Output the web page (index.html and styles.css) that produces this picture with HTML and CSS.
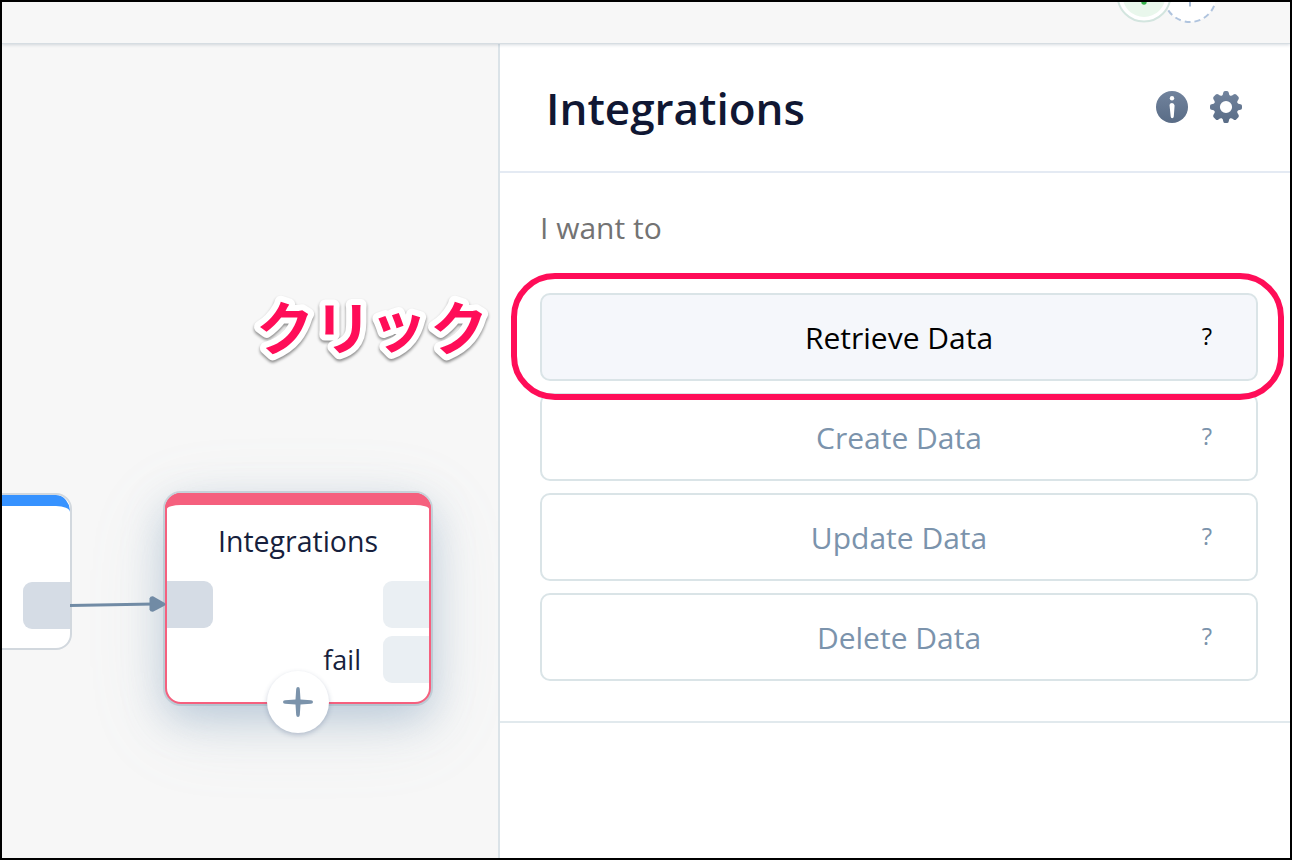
FILE: index.html
```html
<!DOCTYPE html>
<html lang="en">
<head>
<meta charset="utf-8">
<title>Integrations</title>
<link rel="stylesheet" href="styles.css">
</head>
<body>
<div class="app">
  <header class="topbar">
    <svg class="avatars" width="110" height="24" viewBox="0 0 110 24">
      <circle cx="80" cy="-6" r="26" fill="#fff" stroke="#b0c4de" stroke-width="2" stroke-dasharray="6 4"/>
      <path d="M80-10V4.500" stroke="#a9bdd8" stroke-width="2"/>
      <circle cx="34" cy="-7" r="26.500" fill="#fff" stroke="#d3e5df" stroke-width="2"/>
      <circle cx="34" cy="-6.500" r="21.500" fill="#e9f7ec"/>
      <circle cx="34" cy="0" r="2.700" fill="#34b24a"/>
    </svg>
  </header>
  <main class="workspace">
    <section class="canvas">
      <div class="node node-prev"><i class="port port-prev"></i></div>
      <div class="node node-current">
        <h2 class="node-title">Integrations</h2>
        <i class="port port-in"></i>
        <i class="port port-next"></i>
        <i class="port port-fail"></i>
        <span class="fail-label">fail</span>
      </div>
      <svg class="edge" width="100" height="24" viewBox="0 0 100 24">
        <path d="M0 13.500L84 12" stroke="#718ba5" stroke-width="3"/>
        <path d="M79.500 6.500Q80 4 83 4.200L94 10.500Q97 12.300 94 14L83 19.800Q80 20 79.500 17.500Z" fill="#718ba5"/>
      </svg>
      <button class="add" aria-label="Add">
        <svg width="32" height="32" viewBox="0 0 32 32"><path d="M16 1Q17.800 1 17.800 3L18.500 13.500L29 14.200Q31 14.400 31 16T29 17.800L18.500 18.500L17.800 29Q17.600 31 16 31T14.200 29L13.500 18.500L3 17.800Q1 17.600 1 16T3 14.200L13.500 13.500L14.200 3Q14.400 1 16 1Z" fill="#7b93ab"/></svg>
      </button>
      <svg class="callout" width="250" height="84" viewBox="0 0 250 84" lang="ja"><text x="8 66 121.500 182" y="60 60 56.500 60">クリック</text></svg>
    </section>
    <aside class="panel">
      <div class="panel-head">
        <h1 class="title">Integrations</h1>
        <div class="tools">
          <svg width="32" height="32" viewBox="0 0 32 32">
            <defs><linearGradient id="slate" x1="0" y1="0" x2="0" y2="1"><stop offset="0" stop-color="#71839d"/><stop offset="1" stop-color="#596c86"/></linearGradient></defs>
            <circle cx="16" cy="16" r="16" fill="url(#slate)"/>
            <circle cx="16" cy="7.300" r="2.200" fill="#fff"/>
            <path d="M13.500 14Q13.800 12 16 12T18.600 14.500L17.800 25.500Q17.600 27.200 16.200 27.200T14.700 25.500Z" fill="#fff"/>
          </svg>
          <svg width="32" height="32" viewBox="0 0 32 32">
            <path fill="url(#slate)" fill-rule="evenodd" d="M15 0H17Q18.500 0 18.700 1.500Q19 4.200 20.300 4.700Q21.500 5.200 23.500 3.600Q25 2.600 26.200 3.600L28.400 5.800Q29.400 7 28.400 8.500Q26.800 10.500 27.300 11.700Q27.800 13 30.500 13.300Q32 13.500 32 15V17Q32 18.500 30.500 18.700Q27.800 19 27.300 20.300Q26.800 21.500 28.400 23.500Q29.400 25 28.400 26.200L26.200 28.400Q25 29.400 23.500 28.400Q21.500 26.800 20.300 27.300Q19 27.800 18.700 30.500Q18.500 32 17 32H15Q13.500 32 13.300 30.500Q13 27.800 11.700 27.300Q10.500 26.800 8.500 28.400Q7 29.400 5.800 28.400L3.600 26.200Q2.600 25 3.600 23.500Q5.200 21.500 4.700 20.300Q4.200 19 1.500 18.700Q0 18.500 0 17V15Q0 13.500 1.500 13.300Q4.200 13 4.700 11.700Q5.200 10.500 3.600 8.500Q2.600 7 3.600 5.800L5.800 3.600Q7 2.600 8.500 3.600Q10.500 5.200 11.700 4.700Q13 4.200 13.300 1.500Q13.500 0 15 0ZM16 9.900A6.100 6.100 0 1 0 16 22.100A6.100 6.100 0 1 0 16 9.900Z"/>
          </svg>
        </div>
      </div>
      <div class="panel-body">
        <p class="prompt">I want to</p>
        <div class="options">
          <button class="option selected"><span class="label">Retrieve Data</span><span class="help">?</span></button>
          <button class="option"><span class="label">Create Data</span><span class="help">?</span></button>
          <button class="option"><span class="label">Update Data</span><span class="help">?</span></button>
          <button class="option"><span class="label">Delete Data</span><span class="help">?</span></button>
        </div>
      </div>
    </aside>
  </main>
  <div class="highlight"></div>
</div>
</body>
</html>
```
FILE: styles.css
```css
* { box-sizing: border-box; }
body { margin: 0; font-family: "Open Sans", sans-serif; overflow: hidden; }
h1, h2, p { margin: 0; font-weight: 400; }
button { margin: 0; padding: 0; font: inherit; }
svg { display: block; }

.app {
  position: relative;
  display: flex;
  flex-direction: column;
  width: 1292px;
  height: 860px;
  border: 2px solid #000;
  background: #f7f7f7;
  overflow: hidden;
}
.topbar {
  position: relative;
  z-index: 2;
  display: flex;
  justify-content: flex-end;
  flex: 0 0 42px;
  padding-right: 70px;
  border-bottom: 1px solid #d6dde2;
  background: #f7f7f7;
  box-shadow: 0 1px 3px rgba(100, 120, 140, .25);
}
.workspace { display: flex; flex: 1; min-height: 0; }
.canvas { position: relative; flex: 0 0 496px; overflow: hidden; }

/* Flow nodes */
.node { position: absolute; background: #fff; }
.node-prev {
  left: -100px;
  top: 449px;
  width: 170px;
  height: 157px;
  border: 2px solid #d2d8de;
  border-radius: 16px;
  overflow: hidden;
}
.node-prev::before, .node-current::before {
  content: "";
  position: absolute;
  top: 0;
  left: 0;
  right: 0;
  height: 40px;
  border-top: 11px solid #3692ff;
  border-radius: 14px 14px 0 0;
}
.node-prev::before { border-radius: 0 14px 0 0 / 0 17px 0 0; }
.node-current {
  left: 163px;
  top: 449px;
  width: 266px;
  height: 211px;
  border: 2px solid #f5607e;
  border-radius: 16px;
  box-shadow: 0 0 0 2px rgba(140, 165, 180, .36), 0 14px 40px rgba(115, 150, 185, .4), 0 20px 80px rgba(140, 165, 180, .16);
}
.node-current::before {
  top: -2px;
  left: -2px;
  right: -2px;
  border-top: 12px solid #f5607e;
  border-right: 2px solid #f5607e;
  border-left: 2px solid #f5607e;
  border-radius: 16px 16px 0 0;
}
.node-title {
  margin-top: 27px;
  color: #171f3d;
  font-size: 28.5px;
  line-height: 38px;
  text-align: center;
}
.port { position: absolute; height: 47px; background: #d5dce5; }
.port-prev { right: 0; top: 87px; width: 47px; border-radius: 9px 0 0 9px; }
.port-in { left: 0; top: 86px; width: 46px; border-radius: 0 9px 9px 0; }
.port-next, .port-fail { right: 0; top: 86px; width: 46px; border-radius: 9px 0 0 9px; background: #eaeff3; }
.port-fail { top: 141px; }
.fail-label { position: absolute; right: 68px; top: 146px; color: #171f3d; font-size: 27px; line-height: 38px; }
.edge { position: absolute; left: 68px; top: 548px; }
.add {
  position: absolute;
  left: 265px;
  top: 627px;
  display: grid;
  place-items: center;
  width: 62px;
  height: 62px;
  border: 0;
  border-radius: 50%;
  background: #fff;
  box-shadow: 0 2px 5px rgba(70, 90, 130, .3);
}
.callout {
  position: absolute;
  left: 246px;
  top: 246px;
  overflow: visible;
  fill: #ff0d58;
  stroke: #fff;
  stroke-width: 12px;
  stroke-linejoin: round;
  paint-order: stroke fill;
  font: 700 58px "Noto Sans CJK JP", sans-serif;
  filter: drop-shadow(0 2px 1.5px rgba(0, 0, 0, .45));
}

/* Settings panel */
.panel { flex: 1; border-left: 2px solid #dbe3e8; background: #fff; }
.panel-head {
  display: flex;
  align-items: center;
  justify-content: space-between;
  height: 129px;
  padding: 0 48px 2px 46px;
  border-bottom: 2px solid #e4eaf3;
}
.title { padding-top: 2px; color: #101733; font-size: 44px; line-height: 60px; font-weight: 600; }
.tools { display: flex; gap: 22px; }
.panel-body { height: 550px; padding: 34px 32px 0 40px; border-bottom: 2px solid #e1e9ed; }
.prompt { color: #737373; font-size: 30px; line-height: 41px; }
.options { display: flex; flex-direction: column; gap: 12px; margin-top: 45px; }
.option {
  display: grid;
  grid-template-columns: 60px 1fr 60px;
  align-items: center;
  height: 88px;
  border: 2px solid #dae4e7;
  border-radius: 10px;
  background: #fff;
  color: #7b93ac;
  font-size: 30px;
}
.selected { background: #f5f7fb; color: #000; }
.label { grid-column: 2; line-height: 40px; padding-top: 1px; }
.help { padding-right: 38px; padding-bottom: 2px; font-size: 24px; line-height: 32px; text-align: center; }
.highlight {
  position: absolute;
  z-index: 3;
  left: 509px;
  top: 271px;
  width: 773px;
  height: 127px;
  border: 6px solid #ff0d58;
  border-radius: 44px;
}
```
